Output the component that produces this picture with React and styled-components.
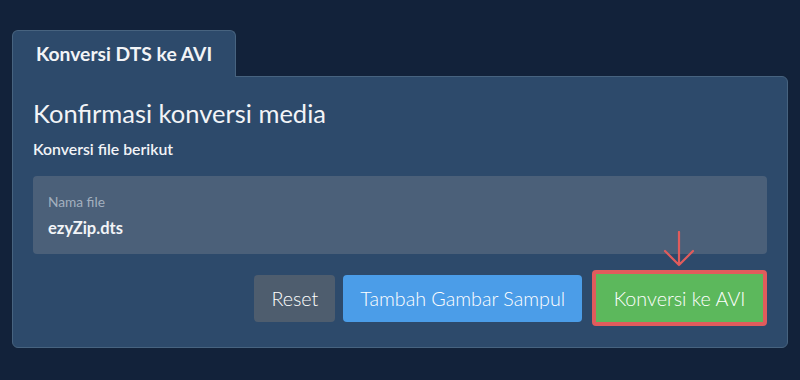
import React from 'react';
import styled, { createGlobalStyle } from 'styled-components';

const Global = createGlobalStyle`
  body {
    margin: 0;
    background: #12223a;
    font-family: Lato, "Open Sans", sans-serif;
    color: #f2f4f7;
  }
`;

const Page = styled.div`
  padding: 30px 12px 0 12px;
  height: 380px;
  box-sizing: border-box;
`;

const Tab = styled.div`
  position: relative;
  z-index: 1;
  width: 224px;
  height: 47px;
  box-sizing: border-box;
  margin-bottom: -1px;
  padding: 11px 0 0 23px;
  background: #2d4a6b;
  border: 1px solid #47637f;
  border-bottom: none;
  border-radius: 6px 6px 0 0;
  font-size: 19.3px;
  font-weight: 700;
`;

const Panel = styled.div`
  background: #2d4a6b;
  border: 1px solid #47637f;
  border-radius: 0 6px 6px 6px;
  padding: 20px 20px 24px 20px;
  height: 272px;
  box-sizing: border-box;
`;

const Title = styled.h1`
  margin: 0;
  font-size: 25.5px;
  font-weight: 400;
  line-height: 32px;
`;

const Subtitle = styled.p`
  margin: 10px 0 0;
  font-size: 15.8px;
  font-weight: 600;
  line-height: 20px;
`;

const FileBox = styled.div`
  margin-top: 17px;
  height: 78px;
  box-sizing: border-box;
  background: #4b6079;
  border-radius: 4px;
  padding: 17px 15px 0;
`;

const Label = styled.div`
  font-size: 13.7px;
  color: #a3b0bf;
  line-height: 18px;
`;

const FileName = styled.div`
  margin-top: 7px;
  font-size: 16.5px;
  font-weight: 700;
  line-height: 20px;
`;

const Actions = styled.div`
  display: flex;
  justify-content: flex-end;
  align-items: center;
  gap: 8px;
  margin-top: 16px;
`;

const colors = {
  gray: '#4e5d6e',
  blue: '#4b9de8',
  green: '#5cb85c',
};

const Button = styled.button`
  font-family: inherit;
  font-size: 19.7px;
  font-weight: 300;
  color: #fff;
  background: ${({ tone }) => colors[tone]};
  border: ${({ highlight }) => (highlight ? '4px solid #e05c5c' : 'none')};
  border-radius: 4px;
  height: ${({ highlight }) => (highlight ? '56px' : '47px')};
  padding: 0 ${({ highlight }) => (highlight ? '17.5px' : '17px')};
  margin-left: ${({ highlight }) => (highlight ? '2px' : '0')};
  cursor: pointer;
`;

const HighlightWrap = styled.div`
  position: relative;
`;

const Arrow = styled.svg`
  position: absolute;
  left: 50%;
  top: -39px;
  transform: translateX(-50%);
`;

export default function App() {
  return (
    <>
      <Global />
      <Page>
        <Tab>Konversi DTS ke AVI</Tab>
        <Panel>
          <Title>Konfirmasi konversi media</Title>
          <Subtitle>Konversi file berikut</Subtitle>
          <FileBox>
            <Label>Nama file</Label>
            <FileName>ezyZip.dts</FileName>
          </FileBox>
          <Actions>
            <Button tone="gray">Reset</Button>
            <Button tone="blue">Tambah Gambar Sampul</Button>
            <HighlightWrap>
              <Arrow width="32" height="36" viewBox="0 0 32 36" fill="none">
                <path d="M16 1V34M2 20L16 34L30 20" stroke="#e05c5c" strokeWidth="2.2" strokeLinecap="round" strokeLinejoin="round" />
              </Arrow>
              <Button tone="green" highlight>Konversi ke AVI</Button>
            </HighlightWrap>
          </Actions>
        </Panel>
      </Page>
    </>
  );
}
